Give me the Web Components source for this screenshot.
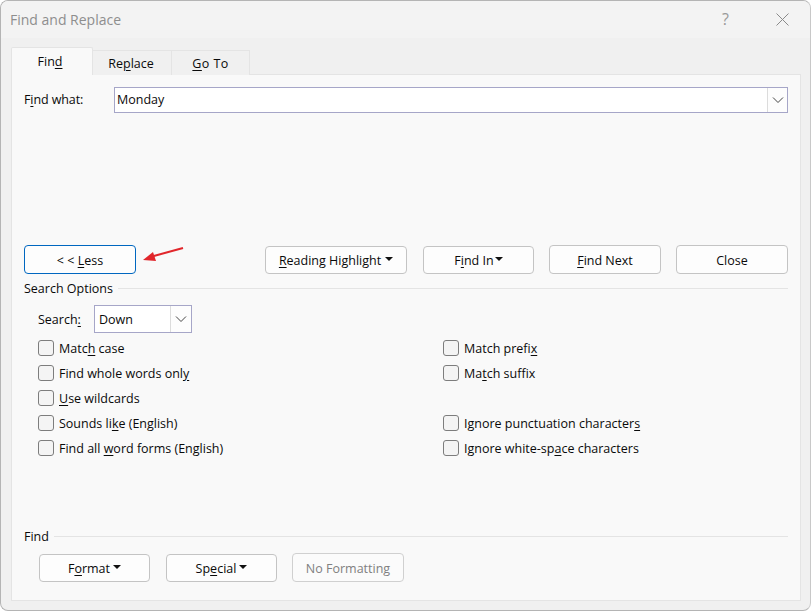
<!DOCTYPE html>
<html>
<head>
<meta charset="utf-8">
<title>Find and Replace</title>
<style>
    html, body { margin: 0; padding: 0; background: #fff; }
    u { text-underline-offset: 2px; text-decoration-thickness: 1px; }
</style>
</head>
<body>

<find-dialog>
    <dlg-tabs slot="tabs"></dlg-tabs>

    <find-what slot="find"></find-what>

    <div slot="actions" style="display:contents">
        <dlg-button w="112" h="29" focused>&lt; &lt; <u>L</u>ess</dlg-button>
        <red-arrow></red-arrow>
        <dlg-button w="142" style="margin-left:129px"><u>R</u>eading Highlight<drop-caret></drop-caret></dlg-button>
        <dlg-button w="111" style="margin-left:16px">F<u>i</u>nd In<drop-caret style="margin-left:1px"></drop-caret></dlg-button>
        <dlg-button w="112" h="29" style="margin-left:15px"><u>F</u>ind Next</dlg-button>
        <dlg-button w="112" h="29" style="margin-left:15px">Close</dlg-button>
    </div>

    <group-line slot="options">Search Options</group-line>
    <search-row slot="options"></search-row>
    <check-grid slot="options">
        <dlg-check>Matc<u>h</u> case</dlg-check>
        <dlg-check>Match prefi<u>x</u></dlg-check>
        <dlg-check>Find whole words onl<u>y</u></dlg-check>
        <dlg-check>Ma<u>t</u>ch suffix</dlg-check>
        <dlg-check><u>U</u>se wildcards</dlg-check>
        <span></span>
        <dlg-check>Sounds li<u>k</u>e (English)</dlg-check>
        <dlg-check>Ignore punctuation character<u>s</u></dlg-check>
        <dlg-check>Find all <u>w</u>ord forms (English)</dlg-check>
        <dlg-check>Ignore white-sp<u>a</u>ce characters</dlg-check>
    </check-grid>

    <group-line slot="bottom">Find</group-line>
    <div slot="bottom" style="display:flex;margin:8px 0 0 15px;align-items:flex-end">
        <dlg-button w="111">F<u>o</u>rmat<drop-caret style="margin-left:3px"></drop-caret></dlg-button>
        <dlg-button w="111" style="margin-left:16px">Sp<u>e</u>cial<drop-caret style="margin-left:3px"></drop-caret></dlg-button>
        <dlg-button w="112" h="29" disabled style="margin-left:15px">No Formatting</dlg-button>
    </div>
</find-dialog>

<script>
const FONT = '"Open Sans", "Noto Sans", "Liberation Sans", sans-serif'

function component(name, html, setup) {
    customElements.define(name, class extends HTMLElement {
        constructor() {
            super();
            this.attachShadow({mode: 'open'});
            this.shadowRoot.innerHTML = html;
        }
        connectedCallback() {
            if (setup) setup(this);
        }
    })
}

component('find-dialog', `
    <style>
    :host {
        display: flex;
        flex-direction: column;
        box-sizing: border-box;
        width: 811px;
        height: 611px;
        background: #f0f0f0;
        border: 1px solid #b4b4b4;
        border-right-color: #c8c8c8;
        border-radius: 8px;
        font-family: ${FONT};
        font-size: 12.5px;
        color: #0a0a0a;
        overflow: hidden;
    }
    .title {
        display: flex;
        align-items: center;
        height: 36px;
        padding-bottom: 1px;
        flex: none;
        background: #f3f3f3;
        padding-left: 9px;
        padding-right: 21px;
        color: #8e8e8e;
        font-size: 14px;
    }
    .title span { flex: 1; }
    .help { flex: none !important; font-size: 16px; margin-right: 47px; color: #999; }
    .tabs { height: 36px; flex: none; margin-left: 10px; display:flex; align-items:flex-end; }
    .panel {
        box-sizing: border-box;
        width: 790px;
        height: 527px;
        flex: none;
        margin-left: 10px;
        background: #f9f9f9;
        border: 1px solid #e4e4e4;
        padding: 12px 12px 0 12px;
        display: flex;
        flex-direction: column;
    }
    .spacer { height: 132px; flex: none; }
    .actions { display: flex; align-items: flex-end; position: relative; height: 29px; flex:none; margin-bottom: 5px; }
    .bottom { margin-top: auto; margin-bottom: 18px; }
    </style>
    <div class="title">
        <span>Find and Replace</span>
        <span class="help">?</span>
        <svg width="13" height="13" viewBox="0 0 13 13"><path d="M.5.5l12 12M12.500.5l-12 12" stroke="#8a8a8a" fill="none"/></svg>
    </div>
    <div class="tabs"><slot name="tabs"></slot></div>
    <div class="panel">
        <slot name="find"></slot>
        <div class="spacer"></div>
        <div class="actions"><slot name="actions"></slot></div>
        <slot name="options"></slot>
        <div class="bottom"><slot name="bottom"></slot></div>
    </div>
`)

component('dlg-tabs', `
    <style>
    :host { display: flex; align-items: flex-end; position: relative; top: 1px; }
    .tab {
        box-sizing: border-box;
        height: 25px;
        background: #f0f0f0;
        border: 1px solid #e4e4e4;
        border-bottom: none;
        margin-left: -1px;
        display: flex;
        align-items: center;
        justify-content: center;
    }
    .on {
        height: 28px;
        background: #f9f9f9;
        margin-left: 0;
        border-top-left-radius: 2px;
        border-top-right-radius: 2px;
        position: relative;
        padding-right: 4px;
        z-index: 1;
    }
    u { text-underline-offset: 2px; text-decoration-thickness: 1px; }
    </style>
    <div class="tab on" style="width:82px">Fin<u>d</u></div>
    <div class="tab" style="width:80px;padding-right:2px">Re<u>p</u>lace</div>
    <div class="tab" style="width:79px;letter-spacing:.4px"><u>G</u>o To</div>
`)

component('find-what', `
    <style>
    :host { display: flex; align-items: center; height: 26px; }
    label { width: 90px; flex: none; margin-top: -1px; letter-spacing: -.1px; }
    .box {
        box-sizing: border-box;
        width: 675px;
        height: 26px;
        background: #fff;
        border: 1px solid #a6a6c8;
        display: flex;
        align-items: center;
        padding-left: 2px;
    }
    .box span { flex: 1; margin-top: -2px; }
    u { text-underline-offset: 2px; text-decoration-thickness: 1px; }
    .drop {
        box-sizing: border-box;
        width: 20px;
        height: 24px;
        background: #fdfdfd;
        border-left: 1px solid #dcdcdc;
        display: flex;
        align-items: center;
        justify-content: center;
    }
    </style>
    <label>F<u>i</u>nd what:</label>
    <div class="box">
        <span>Monday</span>
        <div class="drop"><svg width="12" height="6" viewBox="0 0 12 6"><path d="M1 .5l5 5 5-5" fill="none" stroke="#444"/></svg></div>
    </div>
`)

component('dlg-button', `
    <style>
    :host {
        display: inline-flex;
        box-sizing: border-box;
        align-items: center;
        justify-content: center;
        flex: none;
        height: 28px;
        background: #fdfdfd;
        border: 1px solid #c4c4c4;
        border-radius: 4px;
        white-space: pre;
    }
    :host([focused]) { border-color: #0067c0; }
    :host([disabled]) { color: #808080; background: #fbfbfb; border-color: #d0d0d0; }
    </style>
    <slot></slot>
`, el => {
    el.style.width = el.getAttribute('w') + 'px'
    if (el.hasAttribute('h')) {
        el.style.height = el.getAttribute('h') + 'px'
        el.style.paddingTop = '1px'
    }
})

component('drop-caret', `
    <style>
    :host { display: inline-block; width: 0; height: 0; border: 4px solid transparent; border-top: 4px solid #111; border-bottom: none; margin: 0 0 2px 4px; vertical-align: middle; }
    </style>
`)

component('red-arrow', `
    <style>
    :host { position: absolute; left: 117px; top: 0; width: 44px; height: 18px; display: block; }
    </style>
    <svg width="44" height="18" viewBox="0 0 44 18">
        <path d="M42 3 L11 11.500" stroke="#e1262b" stroke-width="2" fill="none"/>
        <path d="M2 15 L12 7 L15 16 Z" fill="#e1262b"/>
    </svg>
`)

component('group-line', `
    <style>
    :host { display: flex; align-items: center; height: 18px; }
    .rule { flex: 1; height: 1px; background: #e4e4e4; margin-left: 5px; }
    </style>
    <slot></slot><div class="rule"></div>
`)

component('search-row', `
    <style>
    :host { display: flex; align-items: center; height: 28px; margin: 8px 0 2px 14px; }
    label { width: 56px; flex: none; }
    u { text-underline-offset: 2px; text-decoration-thickness: 1px; }
    .box {
        box-sizing: border-box;
        width: 98px;
        height: 28px;
        background: #fff;
        border: 1px solid #a6a6c8;
        display: flex;
        align-items: center;
        padding-left: 4px;
    }
    .box span { flex: 1; }
    .drop {
        box-sizing: border-box;
        width: 21px;
        height: 26px;
        background: #fdfdfd;
        border-left: 1px solid #dcdcdc;
        display: flex;
        align-items: center;
        justify-content: center;
    }
    </style>
    <label>Search<u>:</u></label>
    <div class="box">
        <span>Down</span>
        <div class="drop"><svg width="12" height="6" viewBox="0 0 12 6"><path d="M1 .5l5 5 5-5" fill="none" stroke="#444"/></svg></div>
    </div>
`)

component('check-grid', `
    <style>
    :host { display: grid; grid-template-columns: 405px 1fr; grid-auto-rows: 25px; margin-left: 14px; }
    </style>
    <slot></slot>
`)

component('dlg-check', `
    <style>
    :host { display: flex; align-items: center; white-space: nowrap; }
    .box {
        box-sizing: border-box;
        width: 16px;
        height: 16px;
        background: #f4f4f4;
        border: 1px solid #7d7d7d;
        border-radius: 3px;
        margin-right: 5px;
        flex: none;
    }
    span { padding-top: 1px; }
    </style>
    <div class="box"></div><span><slot></slot></span>
`)
</script>
</body>
</html>
